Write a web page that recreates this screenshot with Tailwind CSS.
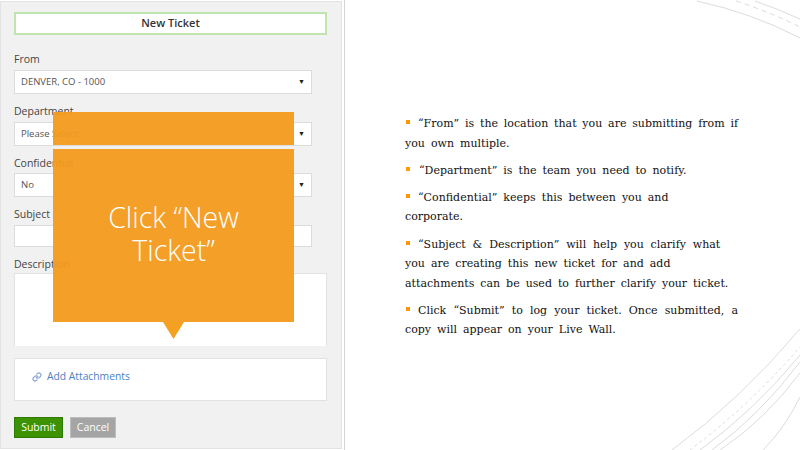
<!DOCTYPE html>
<html lang="en">
    <head>
        <meta charset="UTF-8" />
        <meta name="viewport" content="width=device-width, initial-scale=1.0" />
        <title>New Ticket</title>
        <script src="https://cdn.jsdelivr.net/npm/@tailwindcss/browser@4"></script>
    </head>
    <body class="bg-white">
        <div class="relative flex w-[800px] h-[450px] overflow-hidden bg-white">
            <!-- form panel -->
            <div class="w-[345px] h-[450px] shrink-0 border-r border-[#d4d4d4] pr-[2px] pt-[1px] font-['Open_Sans',sans-serif]">
                <div class="h-[448px] bg-[#f1f1f1] border border-[#e3e3e3] pl-[13px] pr-[14px] pt-[10px] text-[#444]">
                    <div class="h-[23px] w-[313px] bg-white border-2 border-[#c0e4ae] flex items-center justify-center text-[11px] font-semibold text-[#333]">New Ticket</div>

                    <div class="mt-[14px] h-[21px] text-[10.5px] leading-[20px]">From</div>
                    <div class="h-[24px] w-[298px] bg-white border border-[#dcdcdc] flex items-center justify-between pl-[6px] pr-[6px] text-[9.5px] text-[#555]"><span>DENVER, CO - 1000</span><span class="text-[7px] text-[#222]">▼</span></div>

                    <div class="mt-[11px] h-[17px] text-[10.5px] leading-[12px]">Department</div>
                    <div class="h-[24px] w-[298px] bg-white border border-[#dcdcdc] flex items-center justify-between pl-[6px] pr-[6px] text-[9.5px] text-[#555]"><span>Please Select</span><span class="text-[7px] text-[#222]">▼</span></div>

                    <div class="mt-[11px] h-[16px] text-[10.5px] leading-[12px]">Confidential</div>
                    <div class="h-[24px] w-[298px] bg-white border border-[#dcdcdc] flex items-center justify-between pl-[6px] pr-[6px] text-[9.5px] text-[#555]"><span>No</span><span class="text-[7px] text-[#222]">▼</span></div>

                    <div class="mt-[11px] h-[17px] text-[10.5px] leading-[12px]">Subject</div>
                    <div class="h-[22px] w-[298px] bg-white border border-[#dcdcdc]"></div>

                    <div class="mt-[11px] h-[15px] text-[10.5px] leading-[12px]">Description</div>
                    <div class="h-[73px] w-[313px] bg-white border border-b-0 border-[#e2e2e2]"></div>

                    <div class="mt-[12px] h-[43px] w-[313px] bg-white border border-[#e2e2e2] flex items-start pl-[17px] pt-[10px] gap-[5px] text-[10.3px] text-[#4a7fc1]">
                        <svg class="w-[10px] h-[10px] mt-[3px] text-[#8aa6d6]" viewBox="0 0 24 24" fill="none" stroke="currentColor" stroke-width="3" stroke-linecap="round" stroke-linejoin="round"><path d="M10 13a5 5 0 0 0 7.5.5l3-3a5 5 0 0 0-7-7l-1.7 1.7" /><path d="M14 11a5 5 0 0 0-7.5-.5l-3 3a5 5 0 0 0 7 7l1.7-1.7" /></svg>
                        <span>Add Attachments</span>
                    </div>

                    <div class="mt-[16px] flex gap-[7px]">
                        <div class="h-[21px] w-[49px] bg-[#3c9200] border border-[#2f7a00] text-white text-[10.5px] flex items-center justify-center">Submit</div>
                        <div class="h-[21px] w-[46px] bg-[#a5a5a5] border border-[#bdbdbd] text-white text-[10.5px] flex items-center justify-center">Cancel</div>
                    </div>
                </div>
            </div>

            <!-- bullet text -->
            <div class="pl-[60px] pt-[114px] w-[393px] text-[#111] font-['DejaVu_Serif',serif] text-[11px] leading-[19.5px] [word-spacing:2.5px] flex flex-col gap-[7.7px]">
                <p><span class="block [text-align-last:justify] [word-spacing:2px]"><span class="inline-block w-[4px] h-[4px] bg-[#ff9900] ml-[1px] mr-[8px] align-[3px]"></span>“From” is the location that you are submitting from if</span>you own multiple.</p>
                <p><span class="inline-block w-[4px] h-[4px] bg-[#ff9900] ml-[1px] mr-[9px] align-[3px]"></span>“Department” is the team you need to notify.</p>
                <p><span class="inline-block w-[4px] h-[4px] bg-[#ff9900] ml-[1px] mr-[8px] align-[3px]"></span>“Confidential” keeps this between you and<br />corporate.</p>
                <p><span class="[word-spacing:3.3px]"><span class="inline-block w-[4px] h-[4px] bg-[#ff9900] ml-[1px] mr-[8px] align-[3px]"></span>“Subject &amp; Description” will help you clarify what</span><br />you are creating this new ticket for and add<br />attachments can be used to further clarify your ticket.</p>
                <p><span class="block [text-align-last:justify] [word-spacing:2px]"><span class="inline-block w-[4px] h-[4px] bg-[#ff9900] ml-[1px] mr-[8px] align-[3px]"></span>Click “Submit” to log your ticket. Once submitted, a</span>copy will appear on your Live Wall.</p>
            </div>

            <!-- callout over the form -->
            <div class="absolute left-[53px] top-[112px] w-[241px] h-[33px] bg-[#f39a1c]/95"></div>
            <div class="absolute left-[53px] top-[149px] w-[241px] h-[173px] bg-[#f39a1c]/95 flex items-center justify-center text-center text-white font-['Open_Sans',sans-serif] font-light text-[28.5px] leading-[33px]">
                <div class="w-[180px] -mt-[3px]">Click “New Ticket”</div>
            </div>
            <svg class="absolute left-[163px] top-[322px] w-[21px] h-[17px]" viewBox="0 0 21 17"><path d="M0 0H21L10.5 17Z" fill="#f4a021" /></svg>

            <!-- corner swooshes -->
            <svg class="absolute left-0 top-0 w-[800px] h-[450px] pointer-events-none" viewBox="0 0 800 450" fill="none" stroke="#dcdcdc" stroke-width="1">
                <path d="M697 1Q752 13 800 38" />
                <path d="M736 1Q770 12 800 27" stroke-dasharray="5 4" />
                <path d="M755 1Q778 9 800 19" />
                <path d="M672 450Q740 400 800 329" />
                <path d="M690 450Q750 405 800 347" stroke-dasharray="3 3" />
                <path d="M700 450Q755 410 800 355" />
                <path d="M712 450Q760 415 800 362" />
                <path d="M720 450Q765 420 800 373" />
                <path d="M763 450Q785 428 800 397" />
            </svg>
        </div>
    </body>
</html>
